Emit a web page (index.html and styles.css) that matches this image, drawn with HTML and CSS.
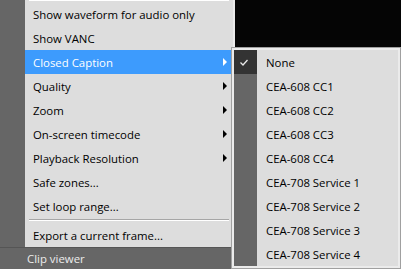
FILE: index.html
```html
<!doctype html>
<html>
    <head>
        <title>Clip viewer menu</title>
        <meta charset="utf-8">
        <link rel="stylesheet" href="styles.css">
    </head>

    <body>
        <div class="app">
            <div class="main">
                <div class="gutter"></div>
                <div class="menu">
                    <div class="sep sep-top"></div>
                    <div class="item">Show waveform for audio only</div>
                    <div class="item">Show VANC</div>
                    <div class="item sub active">Closed Caption</div>
                    <div class="item sub">Quality</div>
                    <div class="item sub">Zoom</div>
                    <div class="item sub">On-screen timecode</div>
                    <div class="item sub">Playback Resolution</div>
                    <div class="item">Safe zones...</div>
                    <div class="item">Set loop range...</div>
                    <div class="sep"></div>
                    <div class="item">Export a current frame...</div>
                </div>
                <div class="viewer"></div>
            </div>
            <div class="status">Clip viewer</div>
        </div>

        <div class="submenu">
            <div class="sub-item checked">
                <span class="icon">
                    <svg width="23" height="24" viewBox="0 0 23 24">
                        <polyline points="6.5,12.5 9,15 13.5,10" fill="none" stroke="#e8e8e8" stroke-width="1.3"/>
                    </svg>
                </span>
                <span class="label">None</span>
            </div>
            <div class="sub-item"><span class="icon"></span><span class="label">CEA-608 CC1</span></div>
            <div class="sub-item"><span class="icon"></span><span class="label">CEA-608 CC2</span></div>
            <div class="sub-item"><span class="icon"></span><span class="label">CEA-608 CC3</span></div>
            <div class="sub-item"><span class="icon"></span><span class="label">CEA-608 CC4</span></div>
            <div class="sub-item"><span class="icon"></span><span class="label">CEA-708 Service 1</span></div>
            <div class="sub-item"><span class="icon"></span><span class="label">CEA-708 Service 2</span></div>
            <div class="sub-item"><span class="icon"></span><span class="label">CEA-708 Service 3</span></div>
            <div class="sub-item"><span class="icon"></span><span class="label">CEA-708 Service 4</span></div>
        </div>
    </body>
</html>
```

FILE: styles.css
```css
body {
    margin: 0;
    background-color: #666666;
    font-family: 'Open Sans', 'Noto Sans', sans-serif;
    font-size: 11.4px;
    overflow: hidden;
}
.app {
    display: flex;
    flex-direction: column;
    width: 401px;
    height: 269px;
}
.main {
    display: flex;
    height: 247px;
}
.gutter {
    width: 25px;
    background-color: #666666;
}
.menu {
    width: 208px;
    background-color: #dddddd;
    border-right: 2px solid #ebebeb;
}
.viewer {
    flex: 1;
    background-color: #050505;
}
.item {
    height: 23px;
    line-height: 23px;
    padding: 1px 0 0 8px;
    color: #000;
    position: relative;
    white-space: nowrap;
}
.item.active {
    background-color: #3d9bfd;
    color: #fff;
}
.sub::after {
    content: '';
    position: absolute;
    right: 6px;
    top: 8px;
    border-left: 4px solid #000;
    border-top: 4px solid transparent;
    border-bottom: 4px solid transparent;
}
.active::after {
    border-left-color: #fff;
}
.sep {
    margin: 1px 4px 2px;
    border-top: 1px solid #a6a6a6;
    border-bottom: 1px solid #fff;
}
.sep-top {
    margin: 0 4px 1px;
    border-top: 0;
}
.status {
    flex: 1;
    background-color: #666666;
    border-top: 1px solid #555555;
    color: #ececec;
    padding: 1px 0 0 27px;
    line-height: 20px;
}
.submenu {
    position: absolute;
    left: 231px;
    top: 47px;
    width: 164px;
    padding: 2px;
    background-color: #ebebeb;
    border: 1px solid #a0a0a0;
}
.sub-item {
    display: flex;
    height: 24px;
    background-color: #dddddd;
}
.icon {
    width: 23px;
    background-color: #666666;
}
.checked .icon {
    background-color: #333333;
}
.icon svg {
    display: block;
}
.label {
    padding: 1px 0 0 9px;
    line-height: 23px;
    color: #000;
    white-space: nowrap;
}
```
